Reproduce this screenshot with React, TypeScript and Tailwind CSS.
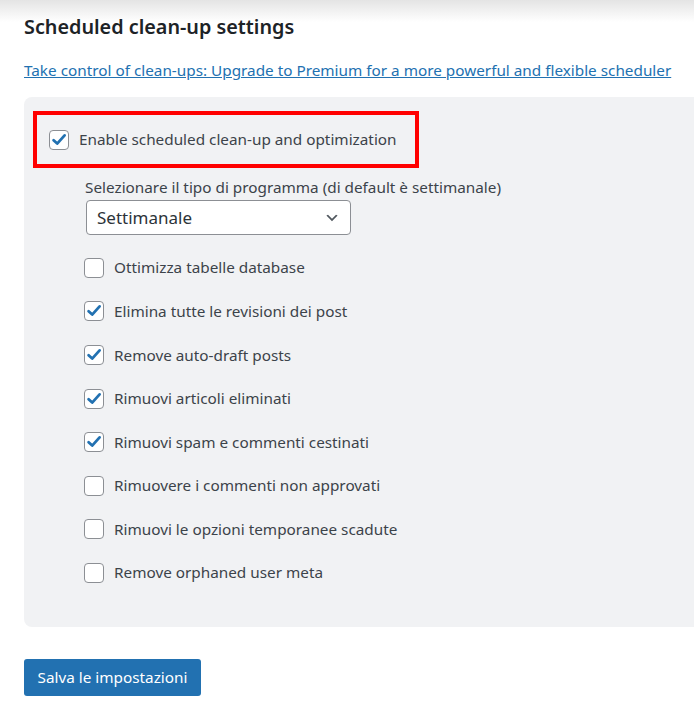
import React from "react";

const options = [
  { label: "Ottimizza tabelle database", checked: false },
  { label: "Elimina tutte le revisioni dei post", checked: true },
  { label: "Remove auto-draft posts", checked: true },
  { label: "Rimuovi articoli eliminati", checked: true },
  { label: "Rimuovi spam e commenti cestinati", checked: true },
  { label: "Rimuovere i commenti non approvati", checked: false },
  { label: "Rimuovi le opzioni temporanee scadute", checked: false },
  { label: "Remove orphaned user meta", checked: false },
];

const CheckBox = ({ checked }: { checked: boolean }) => (
  <span className="flex-none w-5 h-5 rounded-[4px] border border-[#8c8f94] bg-white flex items-center justify-center">
    {checked && (
      <svg viewBox="0 0 18 18" className="w-[18px] h-[18px]">
        <polyline
          points="3.6,9.2 7.2,12.6 14.6,4.4"
          fill="none"
          stroke="#2271b1"
          strokeWidth="2.8"
          strokeLinecap="round"
          strokeLinejoin="round"
        />
      </svg>
    )}
  </span>
);

export default function App() {
  return (
    <div
      className="min-h-[702px] w-[694px] overflow-hidden bg-[linear-gradient(to_bottom,#e4e4e4,#ffffff_22px)] pt-[14px] text-[#3c434a]"
      style={{ fontFamily: '"Noto Sans", Arial, sans-serif' }}
    >
      <h2 className="ml-6 text-[19.8px] leading-[26px] font-semibold text-[#1d2327]">
        Scheduled clean-up settings
      </h2>
      <a
        href="#"
        className="ml-6 mt-[18px] block text-[15.3px] leading-6 text-[#2271b1] underline whitespace-nowrap"
      >
        Take control of clean-ups: Upgrade to Premium for a more powerful and flexible scheduler
      </a>

      <div className="ml-6 mt-[15px] rounded-l-lg bg-[#f1f2f4] pt-[14px] pb-8">
        <div className="ml-[9px] w-[386px] h-[57px] border-[4px] border-[#ff0000] flex items-center pl-3 gap-[10px]">
          <CheckBox checked />
          <span className="text-[15.3px]">Enable scheduled clean-up and optimization</span>
        </div>

        <div className="ml-[61px] mt-[9px] text-[15.3px] leading-5">
          Selezionare il tipo di programma (di default è settimanale)
        </div>
        <div className="ml-[62px] mt-[3px] w-[265px] h-[35px] rounded-[4px] border border-[#8c8f94] bg-white flex items-center justify-between pl-[10px] pr-[10px]">
          <span className="text-[17px] text-[#2c3338]">Settimanale</span>
          <svg viewBox="0 0 20 20" className="w-4 h-4">
            <path d="M5 6l5 5 5-5 2 1-7 7-7-7 2-1z" fill="#50575e" />
          </svg>
        </div>

        <div className="mt-[11px] ml-[60px] flex flex-col">
          {options.map((o) => (
            <div key={o.label} className="h-[43.6px] flex items-center gap-[10px]">
              <CheckBox checked={o.checked} />
              <span className="text-[15.3px]">{o.label}</span>
            </div>
          ))}
        </div>
      </div>

      <button className="ml-6 mt-8 w-[177px] h-[37px] rounded-[3px] bg-[#2271b1] text-white text-[15.3px]">
        Salva le impostazioni
      </button>
    </div>
  );
}
